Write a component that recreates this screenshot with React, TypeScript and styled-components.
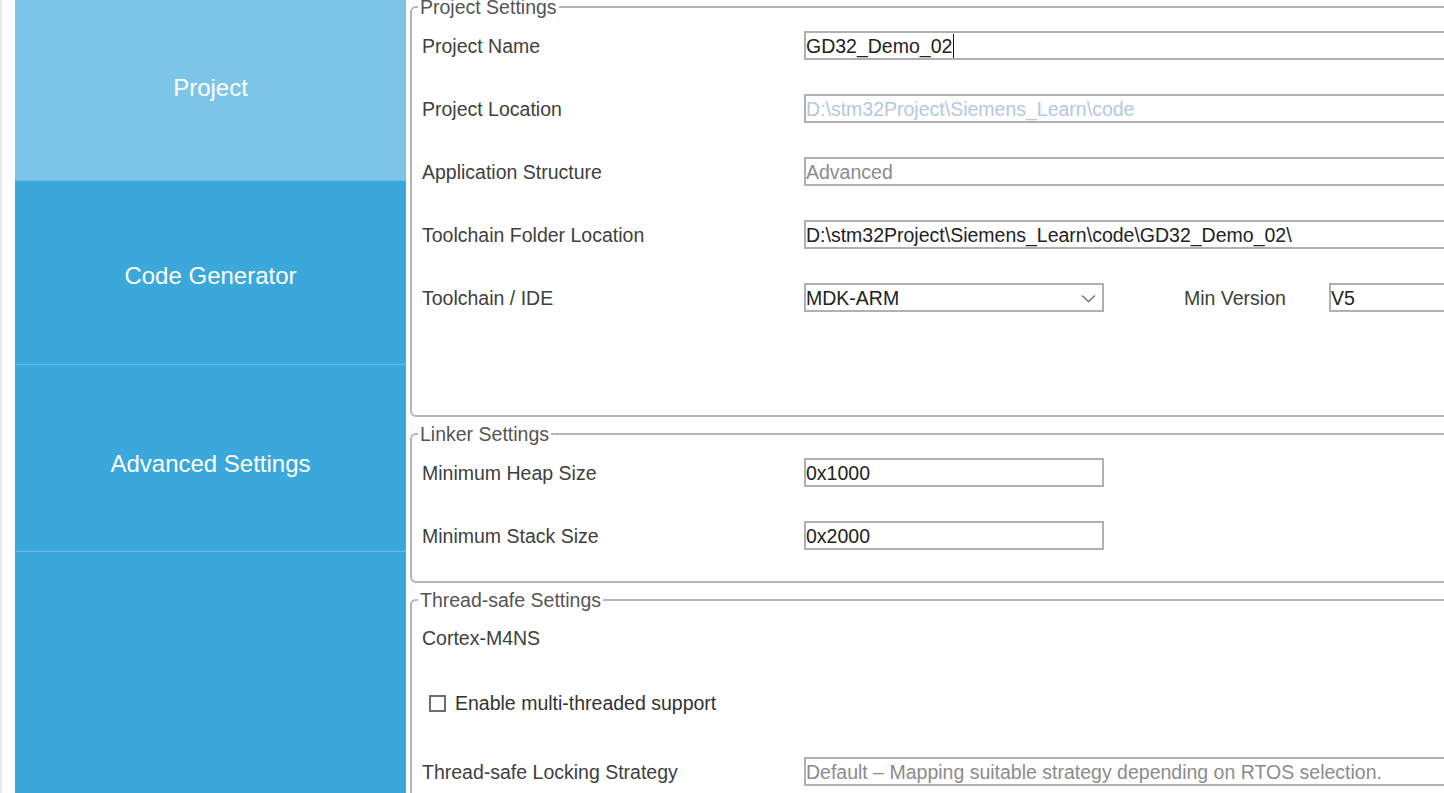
import React from 'react';
import styled, { createGlobalStyle } from 'styled-components';

const GlobalStyle = createGlobalStyle`
  html, body { margin: 0; padding: 0; background: #ffffff; overflow: hidden; }
  body { font-family: "Liberation Sans", Arial, sans-serif; }
  * { box-sizing: border-box; }
`;

const Page = styled.div`
  display: flex;
  width: 1444px;
  height: 793px;
  overflow: hidden;
  background: #ffffff;
`;

const Gutter = styled.div`
  flex: none;
  width: 15px;
  border-left: 2px solid #e8e8e8;
`;

const Sidebar = styled.nav`
  flex: none;
  width: 391px;
  display: flex;
  flex-direction: column;
  background: #3aa8da;
`;

const NavItem = styled.div<{ $active?: boolean; $h: number; $shift?: number }>`
  flex: none;
  height: ${(p) => p.$h}px;
  display: flex;
  align-items: center;
  justify-content: center;
  padding-top: ${(p) => Math.max(0, p.$shift ?? 0)}px;
  padding-bottom: ${(p) => Math.max(0, -(p.$shift ?? 0))}px;
  background: ${(p) => (p.$active ? '#7dc5e8' : '#3aa8da')};
  border-bottom: 1px solid #69bce5;
  color: #ffffff;
  font-size: 24px;
`;

const Main = styled.main`
  flex: 1;
  min-width: 0;
  overflow: hidden;
  padding-left: 4px;
`;

const Group = styled.fieldset<{ $mt: number; $pt: number; $pb: number }>`
  margin: ${(p) => p.$mt}px -40px 0 0;
  padding: ${(p) => p.$pt}px 0 ${(p) => p.$pb}px 6px;
  border: 2px solid #b4b4b4;
  border-radius: 6px;
  min-width: 0;
`;

const Legend = styled.legend`
  padding: 0 2px;
  font-size: 19.5px;
  line-height: 22px;
  color: #555555;
`;

const Row = styled.div<{ $mt?: number }>`
  display: grid;
  grid-template-columns: 382px 1fr;
  align-items: center;
  height: 29px;
  margin-top: ${(p) => p.$mt ?? 0}px;
  padding-left: 4px;
`;

const Label = styled.span`
  padding-top: 2px;
  font-size: 19.5px;
  color: #404040;
  white-space: nowrap;
`;

const Field = styled.div<{ $tone?: 'normal' | 'link' | 'muted'; $w?: number }>`
  display: flex;
  align-items: center;
  height: 29px;
  padding-top: 2px;
  width: ${(p) => (p.$w ? `${p.$w}px` : 'auto')};
  flex: ${(p) => (p.$w ? 'none' : '1')};
  min-width: 0;
  border: 2px solid #b0b0b0;
  background: #ffffff;
  font-size: 19.5px;
  white-space: nowrap;
  overflow: hidden;
  color: ${(p) =>
    p.$tone === 'link' ? '#b3c9e0' : p.$tone === 'muted' ? '#8c8c8c' : '#222222'};
`;

const Caret = styled.span`
  display: inline-block;
  width: 1px;
  height: 24px;
  margin-left: 1px;
  margin-top: -2px;
  background: #111111;
`;

const Select = styled(Field)`
  justify-content: space-between;
  padding-right: 6px;
`;

const Inline = styled.div`
  display: flex;
  align-items: center;
  min-width: 0;
`;

const SideLabel = styled(Label)`
  flex: none;
  width: 145px;
  margin-left: 80px;
`;

const CheckRow = styled.label<{ $mt?: number }>`
  display: flex;
  align-items: center;
  gap: 9px;
  height: 29px;
  margin-top: ${(p) => p.$mt ?? 0}px;
  padding-left: 11px;
  font-size: 19.5px;
  color: #333333;
`;

const Box = styled.span`
  flex: none;
  width: 17px;
  height: 17px;
  border: 2px solid #6c6c6c;
  background: #ffffff;
`;

const Chevron = () => (
  <svg width="15" height="9" viewBox="0 0 15 9" fill="none">
    <path d="M1 1.5 L7.5 7.5 L14 1.5" stroke="#6e6e6e" strokeWidth="1.3" />
  </svg>
);

export default function App() {
  return (
    <>
      <GlobalStyle />
      <Page>
        <Gutter />
        <Sidebar>
          <NavItem $active $h={181} $shift={-4}>Project</NavItem>
          <NavItem $h={184} $shift={6}>Code Generator</NavItem>
          <NavItem $h={187} $shift={11}>Advanced Settings</NavItem>
          <NavItem $h={260} />
        </Sidebar>
        <Main>
          <Group $mt={-4} $pt={13} $pb={103}>
            <Legend>Project Settings</Legend>
            <Row>
              <Label>Project Name</Label>
              <Field>
                GD32_Demo_02
                <Caret />
              </Field>
            </Row>
            <Row $mt={34}>
              <Label>Project Location</Label>
              <Field $tone="link">D:\stm32Project\Siemens_Learn\code</Field>
            </Row>
            <Row $mt={34}>
              <Label>Application Structure</Label>
              <Field $tone="muted">Advanced</Field>
            </Row>
            <Row $mt={34}>
              <Label>Toolchain Folder Location</Label>
              <Field>D:\stm32Project\Siemens_Learn\code\GD32_Demo_02\</Field>
            </Row>
            <Row $mt={34}>
              <Label>Toolchain / IDE</Label>
              <Inline>
                <Select $w={300}>
                  <span>MDK-ARM</span>
                  <Chevron />
                </Select>
                <SideLabel>Min Version</SideLabel>
                <Field>V5</Field>
              </Inline>
            </Row>
          </Group>

          <Group $mt={6} $pt={13} $pb={31}>
            <Legend>Linker Settings</Legend>
            <Row>
              <Label>Minimum Heap Size</Label>
              <Field $w={300}>0x1000</Field>
            </Row>
            <Row $mt={34}>
              <Label>Minimum Stack Size</Label>
              <Field $w={300}>0x2000</Field>
            </Row>
          </Group>

          <Group $mt={6} $pt={12} $pb={40}>
            <Legend>Thread-safe Settings</Legend>
            <Row>
              <Label>Cortex-M4NS</Label>
            </Row>
            <CheckRow $mt={37}>
              <Box />
              Enable multi-threaded support
            </CheckRow>
            <Row $mt={39}>
              <Label>Thread-safe Locking Strategy</Label>
              <Field $tone="muted">Default – Mapping suitable strategy depending on RTOS selection.</Field>
            </Row>
          </Group>
        </Main>
      </Page>
    </>
  );
}
